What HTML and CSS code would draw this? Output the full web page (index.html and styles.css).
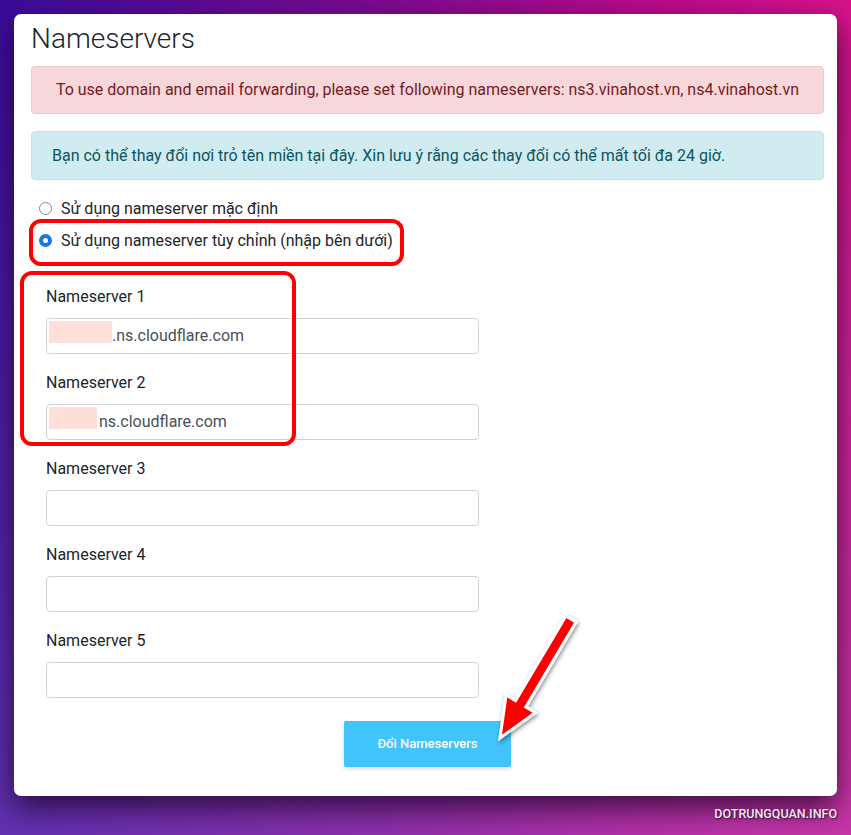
FILE: index.html
```html
<!DOCTYPE html>
<html lang="vi">
<head>
<meta charset="utf-8">
<title>Nameservers</title>
<link rel="stylesheet" href="styles.css">
</head>
<body>
<div class="page">
  <main class="card">
    <h1 class="title">Nameservers</h1>
    <div class="alert alert-danger">To use domain and email forwarding, please set following nameservers: ns3.vinahost.vn, ns4.vinahost.vn</div>
    <div class="alert alert-info">Bạn có thể thay đổi nơi trỏ tên miền tại đây. Xin lưu ý rằng các thay đổi có thể mất tối đa 24 giờ.</div>
    <div class="radios">
      <label class="radio"><span class="dot"></span>Sử dụng nameserver mặc định</label>
      <label class="radio"><span class="dot checked"></span>Sử dụng nameserver tùy chỉnh (nhập bên dưới)</label>
    </div>
    <div class="groups">
      <div class="group">
        <div class="label">Nameserver 1</div>
        <div class="field"><span class="redact r1"></span><span class="val">.ns.cloudflare.com</span></div>
      </div>
      <div class="group">
        <div class="label">Nameserver 2</div>
        <div class="field"><span class="redact r2"></span><span class="val">ns.cloudflare.com</span></div>
      </div>
      <div class="group">
        <div class="label">Nameserver 3</div>
        <div class="field"></div>
      </div>
      <div class="group">
        <div class="label">Nameserver 4</div>
        <div class="field"></div>
      </div>
      <div class="group">
        <div class="label">Nameserver 5</div>
        <div class="field"></div>
      </div>
    </div>
    <div class="actions">
      <button class="btn">Đổi Nameservers</button>
    </div>
  </main>
  <div class="mark mark-radio"></div>
  <div class="mark mark-fields"></div>
  <svg class="arrow" width="851" height="835" viewBox="0 0 851 835">
    <defs>
      <filter id="sh" x="-20%" y="-20%" width="140%" height="140%">
        <feDropShadow dx="1" dy="2" stdDeviation="2" flood-color="#000" flood-opacity="0.45"/>
      </filter>
    </defs>
    <polygon filter="url(#sh)" points="565.9,615.9 576.1,622.1 525.8,706.9 535.3,712.6 500,738 506.1,695 515.6,700.7" fill="#ff0000" stroke="#ffffff" stroke-width="3" stroke-linejoin="miter"/>
  </svg>
  <div class="watermark">DOTRUNGQUAN.INFO</div>
</div>
</body>
</html>
```

FILE: styles.css
```css
* { box-sizing: border-box; }
html, body { margin: 0; padding: 0; }
body {
  width: 851px;
  height: 835px;
  overflow: hidden;
  font-family: Roboto, "Liberation Sans", Arial, sans-serif;
}
.page {
  position: relative;
  width: 851px;
  height: 835px;
  padding: 14px;
  background:
    linear-gradient(to bottom, rgba(255,255,255,0) 0%, rgba(170,120,220,0.35) 100%),
    linear-gradient(to right, #3a0b9c 0%, #7d0a90 45%, #b80a8c 75%, #d8128a 100%);
}
.card {
  width: 823px;
  height: 782px;
  background: #fff;
  border-radius: 7px;
  padding: 8px 13px 29px 17px;
  box-shadow: 0 12px 30px rgba(20, 0, 30, 0.75);
  display: flex;
  flex-direction: column;
}
.title {
  margin: 0 0 10px;
  font-weight: 300;
  font-size: 28px;
  line-height: 1.2;
  color: #212529;
}
.alert {
  border: 1px solid transparent;
  border-radius: 4px;
  font-size: 16px;
  line-height: 24px;
  padding: 11px 20px;
}
.alert-danger {
  background: #f8d7da;
  border-color: #f5c6cb;
  color: #721c24;
  text-align: center;
  margin-bottom: 17px;
}
.alert-info {
  background: #d1ecf1;
  border-color: #bee5eb;
  color: #0c5460;
  padding: 12px 20px 11px;
}
.radios {
  margin-top: 13px;
  display: flex;
  flex-direction: column;
  padding-left: 8px;
}
.radio {
  display: flex;
  align-items: center;
  height: 32px;
  font-size: 16px;
  color: #212529;
}
.dot {
  width: 13px;
  height: 13px;
  border-radius: 50%;
  border: 1px solid #8a8a8a;
  background: #fff;
  margin-right: 9px;
  flex: none;
}
.dot.checked {
  border: 4px solid #1a73e8;
  background: #fff;
}
.groups {
  margin-top: 28px;
  padding-left: 15px;
  display: flex;
  flex-direction: column;
  gap: 17px;
}
.group {
  display: flex;
  flex-direction: column;
}
.label {
  font-size: 16px;
  line-height: 24px;
  color: #212529;
  margin-bottom: 9px;
}
.field {
  width: 433px;
  height: 36px;
  border: 1px solid #ced4da;
  border-radius: 4px;
  background: #fff;
  display: flex;
  align-items: center;
  padding-left: 2px;
  font-size: 16px;
  color: #495057;
}
.redact {
  background: #fde0da;
  height: 22px;
  align-self: flex-start;
  margin-top: 2px;
  flex: none;
}
.r1 { width: 63px; }
.r2 { width: 48px; margin-right: 2px; }
.actions {
  margin-top: 23px;
  display: flex;
  justify-content: center;
}
.btn {
  width: 167px;
  height: 46px;
  border: none;
  border-radius: 2px;
  background: #41c3fb;
  color: #fff;
  font-family: Roboto, "Liberation Sans", Arial, sans-serif;
  font-weight: 500;
  font-size: 13px;
  box-shadow: 0 2px 4px rgba(0,0,0,0.15);
}
.mark {
  position: absolute;
  border: 4px solid #ff0000;
  border-radius: 12px;
}
.mark-radio { left: 29px; top: 219px; width: 375px; height: 47px; }
.mark-fields { left: 20px; top: 271px; width: 276px; height: 175px; }
.arrow {
  position: absolute;
  left: 0;
  top: 0;
  pointer-events: none;
}
.watermark {
  position: absolute;
  right: 14px;
  top: 806px;
  font-size: 12.5px;
  font-weight: 500;
  color: #f2e8f2;
  text-shadow: 1px 1px 2px rgba(0,0,0,0.7);
}
```
